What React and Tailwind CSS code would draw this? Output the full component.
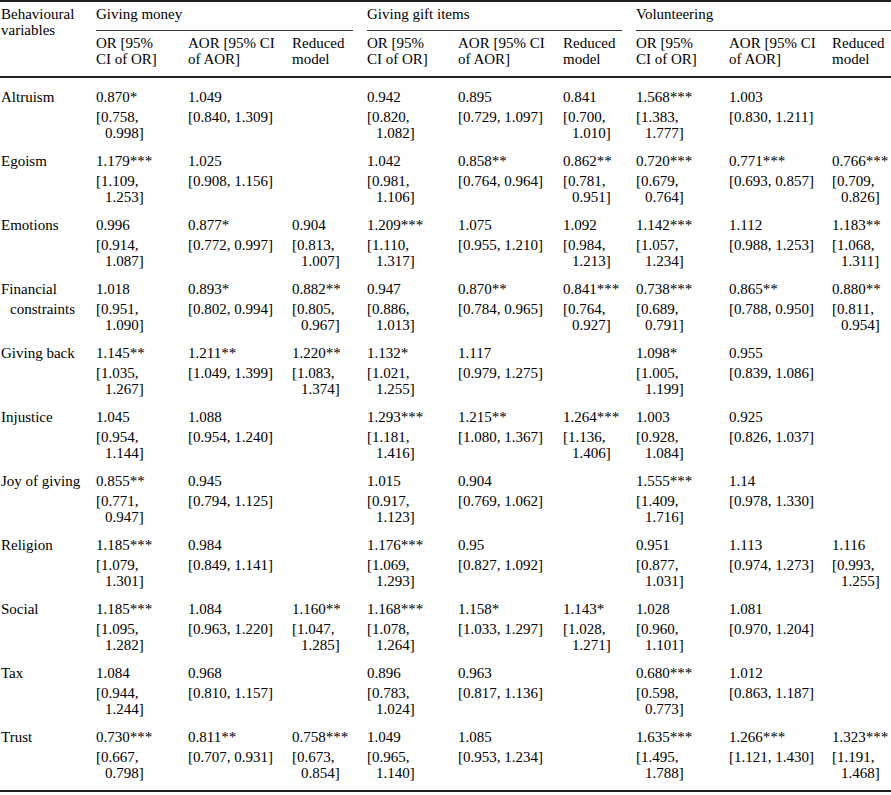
import React from "react";

const COLS =
  "grid grid-cols-[96px_92px_104px_75px_91px_105px_73px_93px_103px_59px]";

const rows = [
  ["Altruism", null, [
    ["0.870*", "[0.758,|0.998]"], ["1.049", "[0.840, 1.309]"], null,
    ["0.942", "[0.820,|1.082]"], ["0.895", "[0.729, 1.097]"], ["0.841", "[0.700,|1.010]"],
    ["1.568***", "[1.383,|1.777]"], ["1.003", "[0.830, 1.211]"], null,
  ]],
  ["Egoism", null, [
    ["1.179***", "[1.109,|1.253]"], ["1.025", "[0.908, 1.156]"], null,
    ["1.042", "[0.981,|1.106]"], ["0.858**", "[0.764, 0.964]"], ["0.862**", "[0.781,|0.951]"],
    ["0.720***", "[0.679,|0.764]"], ["0.771***", "[0.693, 0.857]"], ["0.766***", "[0.709,|0.826]"],
  ]],
  ["Emotions", null, [
    ["0.996", "[0.914,|1.087]"], ["0.877*", "[0.772, 0.997]"], ["0.904", "[0.813,|1.007]"],
    ["1.209***", "[1.110,|1.317]"], ["1.075", "[0.955, 1.210]"], ["1.092", "[0.984,|1.213]"],
    ["1.142***", "[1.057,|1.234]"], ["1.112", "[0.988, 1.253]"], ["1.183**", "[1.068,|1.311]"],
  ]],
  ["Financial", "constraints", [
    ["1.018", "[0.951,|1.090]"], ["0.893*", "[0.802, 0.994]"], ["0.882**", "[0.805,|0.967]"],
    ["0.947", "[0.886,|1.013]"], ["0.870**", "[0.784, 0.965]"], ["0.841***", "[0.764,|0.927]"],
    ["0.738***", "[0.689,|0.791]"], ["0.865**", "[0.788, 0.950]"], ["0.880**", "[0.811,|0.954]"],
  ]],
  ["Giving back", null, [
    ["1.145**", "[1.035,|1.267]"], ["1.211**", "[1.049, 1.399]"], ["1.220**", "[1.083,|1.374]"],
    ["1.132*", "[1.021,|1.255]"], ["1.117", "[0.979, 1.275]"], null,
    ["1.098*", "[1.005,|1.199]"], ["0.955", "[0.839, 1.086]"], null,
  ]],
  ["Injustice", null, [
    ["1.045", "[0.954,|1.144]"], ["1.088", "[0.954, 1.240]"], null,
    ["1.293***", "[1.181,|1.416]"], ["1.215**", "[1.080, 1.367]"], ["1.264***", "[1.136,|1.406]"],
    ["1.003", "[0.928,|1.084]"], ["0.925", "[0.826, 1.037]"], null,
  ]],
  ["Joy of giving", null, [
    ["0.855**", "[0.771,|0.947]"], ["0.945", "[0.794, 1.125]"], null,
    ["1.015", "[0.917,|1.123]"], ["0.904", "[0.769, 1.062]"], null,
    ["1.555***", "[1.409,|1.716]"], ["1.14", "[0.978, 1.330]"], null,
  ]],
  ["Religion", null, [
    ["1.185***", "[1.079,|1.301]"], ["0.984", "[0.849, 1.141]"], null,
    ["1.176***", "[1.069,|1.293]"], ["0.95", "[0.827, 1.092]"], null,
    ["0.951", "[0.877,|1.031]"], ["1.113", "[0.974, 1.273]"], ["1.116", "[0.993,|1.255]"],
  ]],
  ["Social", null, [
    ["1.185***", "[1.095,|1.282]"], ["1.084", "[0.963, 1.220]"], ["1.160**", "[1.047,|1.285]"],
    ["1.168***", "[1.078,|1.264]"], ["1.158*", "[1.033, 1.297]"], ["1.143*", "[1.028,|1.271]"],
    ["1.028", "[0.960,|1.101]"], ["1.081", "[0.970, 1.204]"], null,
  ]],
  ["Tax", null, [
    ["1.084", "[0.944,|1.244]"], ["0.968", "[0.810, 1.157]"], null,
    ["0.896", "[0.783,|1.024]"], ["0.963", "[0.817, 1.136]"], null,
    ["0.680***", "[0.598,|0.773]"], ["1.012", "[0.863, 1.187]"], null,
  ]],
  ["Trust", null, [
    ["0.730***", "[0.667,|0.798]"], ["0.811**", "[0.707, 0.931]"], ["0.758***", "[0.673,|0.854]"],
    ["1.049", "[0.965,|1.140]"], ["1.085", "[0.953, 1.234]"], null,
    ["1.635***", "[1.495,|1.788]"], ["1.266***", "[1.121, 1.430]"], ["1.323***", "[1.191,|1.468]"],
  ]],
];

function CI({ text }) {
  const parts = text.split("|");
  return (
    <div className="mt-1 leading-4">
      <div className="whitespace-nowrap">{parts[0]}</div>
      {parts[1] && <div className="pl-[9px] whitespace-nowrap">{parts[1]}</div>}
    </div>
  );
}

function Cell({ cell }) {
  if (!cell) return <div />;
  return (
    <div>
      <div className="leading-4 h-4 whitespace-nowrap">{cell[0]}</div>
      <CI text={cell[1]} />
    </div>
  );
}

function Row({ row, last }) {
  const [label, label2, cells] = row;
  return (
    <div className={`${COLS} ${last ? "pb-[9px]" : "pb-3"}`}>
      <div className="pl-[1px]">
        <div className="leading-4 h-4 whitespace-nowrap">{label}</div>
        {label2 && <div className="mt-1 leading-4 pl-[9px]">{label2}</div>}
      </div>
      {cells.map((c, i) => (
        <Cell key={i} cell={c} />
      ))}
    </div>
  );
}

function Group({ title, mr }) {
  return (
    <div className="col-span-3 pt-1">
      <div className={`leading-4 pb-2 border-b border-[#333] ${mr ? "mr-[14px]" : ""}`}>
        {title}
      </div>
    </div>
  );
}

function Sub({ a, b }) {
  return (
    <div className="pt-1 pb-[9px] leading-4">
      <div className="whitespace-nowrap">{a}</div>
      <div className="whitespace-nowrap">{b}</div>
    </div>
  );
}

export default function App() {
  return (
    <div
      className="w-[891px] h-[795px] bg-white text-black text-[15px] overflow-hidden"
      style={{ fontFamily: '"Liberation Serif", "Times New Roman", serif' }}
    >
      <div className="border-t-2 border-[#222]">
        <div className={`${COLS} border-b-2 border-[#222]`}>
          <div className="row-span-2 pt-1 pl-[1px] leading-4">
            <div>Behavioural</div>
            <div>variables</div>
          </div>
          <Group title="Giving money" mr />
          <Group title="Giving gift items" mr />
          <Group title="Volunteering" />
          <Sub a="OR [95%" b="CI of OR]" />
          <Sub a="AOR [95% CI" b="of AOR]" />
          <Sub a="Reduced" b="model" />
          <Sub a="OR [95%" b="CI of OR]" />
          <Sub a="AOR [95% CI" b="of AOR]" />
          <Sub a="Reduced" b="model" />
          <Sub a="OR [95%" b="CI of OR]" />
          <Sub a="AOR [95% CI" b="of AOR]" />
          <Sub a="Reduced" b="model" />
        </div>
        <div className="pt-[11px] border-b-2 border-[#222]">
          {rows.map((r, i) => (
            <Row key={i} row={r} last={i === rows.length - 1} />
          ))}
        </div>
      </div>
    </div>
  );
}
